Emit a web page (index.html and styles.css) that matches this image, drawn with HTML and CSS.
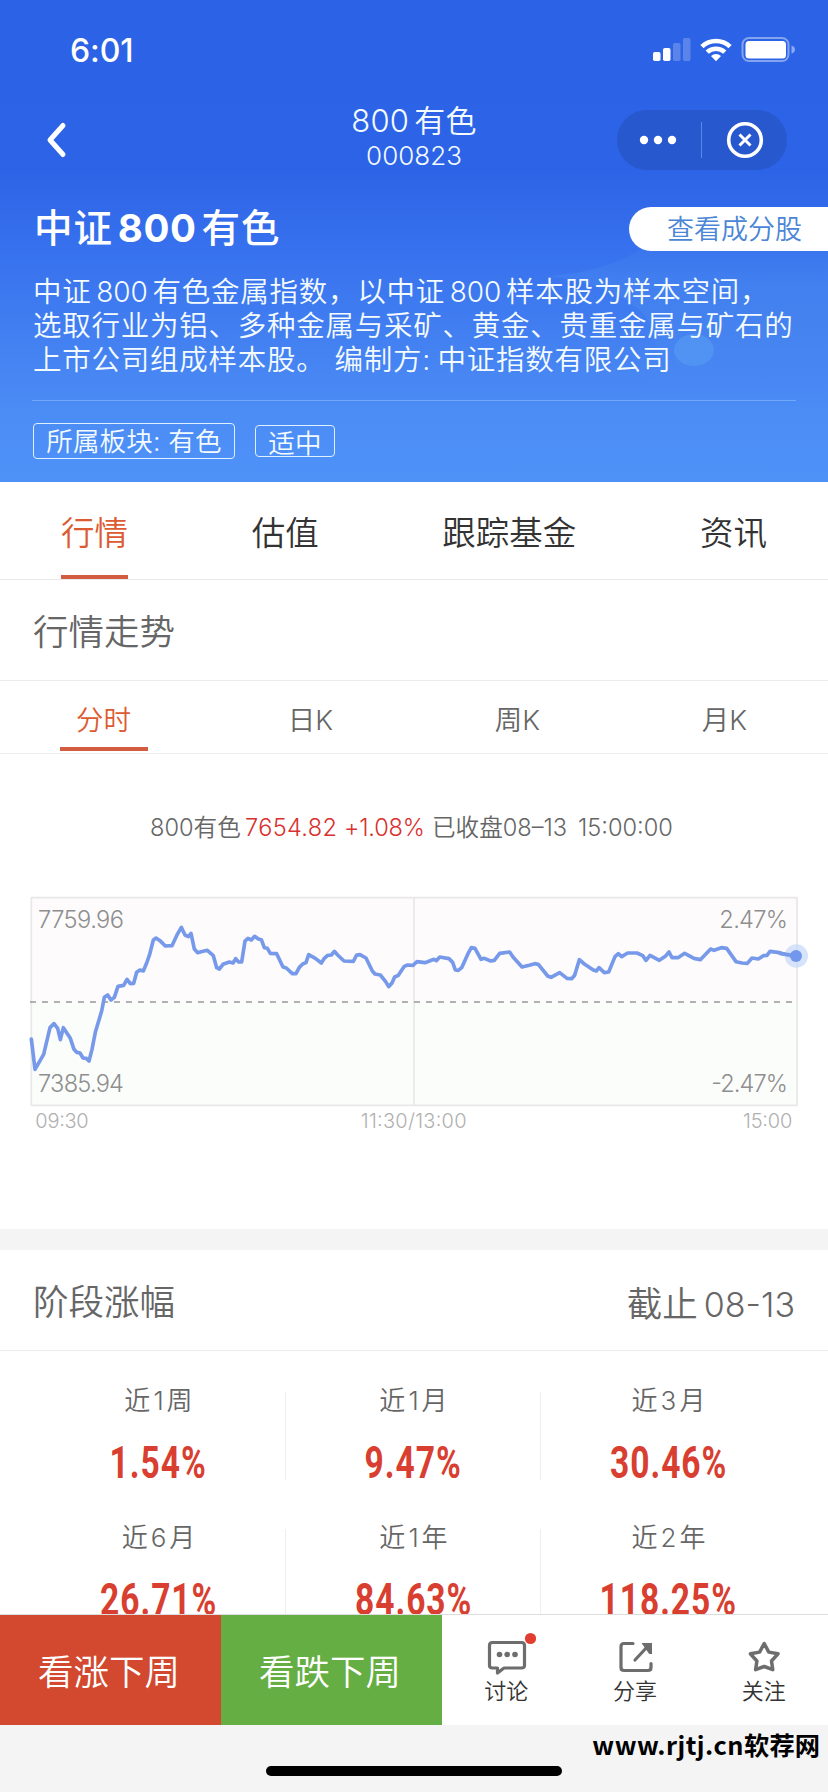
FILE: index.html
```html
<!DOCTYPE html>
<html lang="zh-CN">
<head>
<meta charset="utf-8">
<title>800有色</title>
<link rel="stylesheet" href="styles.css">
</head>
<body>
<div class="phone">
  <header class="hero">
    <svg class="hero-art" viewBox="0 0 828 482" aria-hidden="true">
      <defs>
        <linearGradient id="g" x1="0" y1="0" x2="0" y2="1">
          <stop offset="0" stop-color="#5aa0ee" stop-opacity="0"/>
          <stop offset=".35" stop-color="#5aa0ee" stop-opacity=".22"/>
          <stop offset="1" stop-color="#5aa0ee" stop-opacity="0"/>
        </linearGradient>
      </defs>
      <path d="M550 276Q640 268 660 225H828V400H640Q700 300 550 276Z" fill="url(#g)"/>
      <ellipse cx="694" cy="350" rx="20" ry="16" fill="#5ba4f3" opacity=".45"/>
    </svg>
    <div class="status">
      <span class="clock">6:01</span>
      <svg class="status-icons" viewBox="0 0 144 26">
        <g fill="#fff">
          <rect x="0" y="16" width="7.5" height="9" rx="1.8"/>
          <rect x="10" y="12" width="7.5" height="13" rx="1.8"/>
          <g opacity=".22"><rect x="20" y="7" width="7.5" height="18" rx="1.8"/><rect x="30" y="2" width="7.5" height="23" rx="1.8"/></g>
          <path d="M63 25.2l-5-5.3a7.4 7.4 0 0 1 10 0z"/>
        </g>
        <g fill="none" stroke="#fff" stroke-width="4.6">
          <path d="M48.9 10.6a20.5 20.5 0 0 1 28.2 0"/>
          <path d="M54.2 16.2a12.8 12.8 0 0 1 17.6 0"/>
        </g>
        <rect x="89.5" y="2" width="46" height="23" rx="6.5" fill="none" stroke="#fff" stroke-opacity=".42" stroke-width="2"/>
        <rect x="92.500" y="5" width="40.500" height="17.500" rx="3.500" fill="#fff"/>
        <path d="M138.500 9.500q3.500 1 3.500 4t-3.500 4z" fill="#fff" opacity=".45"/>
      </svg>
    </div>
    <nav class="nav">
      <svg class="back" viewBox="0 0 24 40"><path d="M18 5.500L5 20l13 14.500" fill="none" stroke="#fff" stroke-width="5" stroke-linecap="round" stroke-linejoin="round"/></svg>
      <div class="nav-title"><div class="nav-name"><span class="lat">800</span>有色</div><div class="nav-code">000823</div></div>
      <svg class="capsule" viewBox="0 0 170 60">
        <rect width="170" height="60" rx="30" fill="#2858cd"/>
        <g fill="#fff"><circle cx="27" cy="30" r="4.200"/><circle cx="41" cy="30" r="4.200"/><circle cx="55" cy="30" r="4.200"/></g>
        <path d="M84.500 12v36" stroke="#5c86e4" stroke-width="1"/>
        <circle cx="128" cy="30" r="16.300" fill="none" stroke="#fff" stroke-width="3.600"/>
        <path d="M122.500 24.500l11 11m0-11l-11 11" stroke="#fff" stroke-width="3"/>
      </svg>
    </nav>
    <div class="hero-head">
      <h1 class="hero-name">中证<span class="lat">800</span>有色</h1>
      <a class="members">查看成分股</a>
    </div>
    <p class="intro">中证<span class="lat">800</span>有色金属指数，以中证<span class="lat">800</span>样本股为样本空间，<br>选取行业为铝、多种金属与采矿、黄金、贵重金属与矿石的<br>上市公司组成样本股。<span class="maker">编制方:</span>中证指数有限公司</p>
    <div class="tags"><span class="tag">所属板块: 有色</span><span class="tag small">适中</span></div>
  </header>

  <nav class="tabs">
    <span class="tab active">行情</span><span class="tab">估值</span><span class="tab">跟踪基金</span><span class="tab">资讯</span>
  </nav>
  <h2 class="section-title">行情走势</h2>
  <nav class="periods">
    <span class="period active">分时</span><span class="period">日K</span><span class="period">周K</span><span class="period">月K</span>
  </nav>
  <section class="market">
    <div class="quote"><span class="q-name">800有色</span><span class="q-red">7654.82</span><span class="q-pct">+1.08%</span><span class="q-state">已收盘08–13</span><span>15:00:00</span></div>
    <svg class="chart" viewBox="0 330 2484 750">
      <rect x="93" y="352" width="2299" height="314" fill="#fdfbfc"/>
      <rect x="93" y="666" width="2299" height="310" fill="#fbfdfb"/>
      <path d="M94 352V976M1242 352V976M2391 352V976M92 353H2393M92 976H2393" stroke="#e8e8e8" stroke-width="5" fill="none"/>
      <path d="M90 666H2386" stroke="#999" stroke-width="5" stroke-dasharray="18 18"/>
      <g class="chart-value">
        <text x="114" y="443" textLength="258">7759.96</text><text x="114" y="936" textLength="258">7385.94</text>
        <text x="2364" y="443" text-anchor="end" textLength="206">2.47%</text><text x="2364" y="936" text-anchor="end" textLength="230">-2.47%</text>
      </g>
      <g class="chart-time">
        <text x="106" y="1044" textLength="160">09:30</text><text x="1241" y="1044" text-anchor="middle" textLength="317">11:30/13:00</text><text x="2377" y="1044" text-anchor="end" textLength="148">15:00</text>
      </g>
      <polyline class="line" points="94,777 105,868 131,823 150,743 162,731 173,745 181,779 190,743 211,775 222,808 230,817 240,819 249,834 259,835 267,843 276,808 286,757 305,693 313,652 323,645 333,660 343,652 354,619 371,616 381,598 391,611 401,610 410,577 420,570 430,573 440,549 449,523 460,480 468,474 480,482 496,498 516,497 532,463 544,442 555,465 565,470 573,460 583,507 593,518 612,513 622,511 640,527 650,563 658,567 669,553 688,546 699,549 707,536 716,546 725,546 735,483 744,475 754,480 764,469 775,477 784,479 793,503 802,505 811,520 830,521 849,561 859,564 877,581 888,581 898,562 908,552 918,548 926,524 946,535 964,549 973,535 983,526 994,525 1003,514 1013,525 1032,543 1060,544 1070,525 1080,524 1098,534 1117,573 1125,582 1141,585 1157,605 1166,620 1176,609 1184,591 1195,586 1213,559 1223,555 1240,556 1242,553 1251,545 1275,548 1302,538 1309,542 1319,531 1347,536 1358,547 1366,570 1375,571 1385,563 1404,521 1414,503 1425,505 1443,538 1453,535 1472,543 1483,541 1499,520 1529,516 1539,531 1566,561 1588,556 1604,551 1615,553 1643,588 1653,592 1679,578 1701,595 1715,596 1724,586 1738,539 1753,552 1780,570 1789,573 1797,563 1813,578 1826,576 1845,530 1855,521 1865,530 1883,519 1911,519 1928,527 1938,541 1950,526 1978,541 1996,529 2007,516 2016,533 2034,533 2054,520 2082,535 2101,539 2132,507 2142,511 2164,503 2180,505 2208,545 2226,549 2242,550 2256,534 2275,537 2290,527 2301,526 2310,514 2338,518 2370,527 2389,527"/>
      <circle cx="2389" cy="528" r="35" fill="#c5d9fa" fill-opacity=".7"/><path d="M2340 520L2389 528" class="line"/><circle cx="2388" cy="528" r="18" fill="#7297ec"/>
    </svg>
  </section>
  <div class="band"></div>
  <div class="section-title gains-title"><span>阶段涨幅</span><span class="until">截止<span class="lat">08-13</span></span></div>
  <section class="gains">
    <div class="gain"><span class="label">近<i>1</i>周</span><strong>1.54%</strong></div>
    <div class="gain"><span class="label">近<i>1</i>月</span><strong>9.47%</strong></div>
    <div class="gain"><span class="label">近<i>3</i>月</span><strong>30.46%</strong></div>
    <div class="gain"><span class="label">近<i>6</i>月</span><strong>26.71%</strong></div>
    <div class="gain"><span class="label">近<i>1</i>年</span><strong>84.63%</strong></div>
    <div class="gain"><span class="label">近<i>2</i>年</span><strong>118.25%</strong></div>
  </section>

  <footer class="actions">
    <a class="vote up">看涨下周</a><a class="vote down">看跌下周</a>
    <a class="action">
      <svg viewBox="0 0 50 44"><path d="M10.500 9.500h29q3 0 3 3v20q0 2.500-3 2.500H22l-6.500 5v-5h-5q-3 0-3-2.500v-20q0-3 3-3z" transform="translate(1 0)" fill="none" stroke="#6d6d6d" stroke-width="3.200" stroke-linejoin="round"/><g fill="#6d6d6d"><circle cx="18.500" cy="21.500" r="2.800"/><circle cx="26.200" cy="21.500" r="2.800"/><circle cx="34" cy="21.500" r="2.800"/></g><circle cx="49.500" cy="5.500" r="5.600" fill="#e03e30"/></svg>
      <span>讨论</span></a>
    <a class="action">
      <svg viewBox="0 0 50 44"><g fill="none" stroke="#6d6d6d" stroke-width="3.200" stroke-linecap="round" stroke-linejoin="round"><path d="M23 10.500H14q-3 0-3 3v21q0 3 3 3h24q3 0 3-3v-4M25 27L38 13"/></g><path d="M31.500 10h10.500v11h-2.800z" fill="#6d6d6d"/></svg>
      <span>分享</span></a>
    <a class="action">
      <svg viewBox="0 0 50 44"><path d="M25.200 10.500l4.600 8.600 9.200 1.700-6.500 7.200 1.300 8.700-8.600-3.200-8.600 3.200 1.300-8.700-6.500-7.200 9.200-1.700z" fill="none" stroke="#6d6d6d" stroke-width="3.500" stroke-linejoin="round"/></svg>
      <span>关注</span></a>
  </footer>
  <div class="bottom">
    <div class="watermark"><span class="site">www.rjtj.cn</span>软荐网</div>
    <div class="home"></div>
  </div>
</div>
</body>
</html>
```
FILE: styles.css
```css
* { box-sizing: border-box; }
body { margin: 0; background: #fff; }
h1, h2, p { margin: 0; font-weight: inherit; }
.phone {
  width: 828px; height: 1792px; overflow: hidden;
  display: flex; flex-direction: column;
  font-family: Inter, "Noto Sans CJK SC", sans-serif;
  font-weight: 350; color: #666; white-space: nowrap;
}
.phone > * { flex-shrink: 0; }

.hero {
  position: relative; height: 482px; color: #f4fbff;
  background: linear-gradient(#2c62e5 0, #2d63e6 170px, #3771ee 250px, #4380f1 340px, #4b8cf5 410px, #4e92f8 482px);
}
.hero > * { position: relative; }
.hero .hero-art { position: absolute; inset: 0; width: 828px; height: 482px; }
.status { height: 100px; padding: 0 31px 0 70px; display: flex; align-items: center; justify-content: space-between; }
.clock { font-size: 32px; font-weight: 550; color: #fff; letter-spacing: -.1px; }
.status-icons { width: 144px; height: 26px; margin-top: -2px; }
.nav { height: 80px; padding: 0 41px 0 45px; display: grid; grid-template-columns: 170px 1fr 170px; align-items: center; }
.back { width: 24px; height: 40px; }
.nav-title { text-align: center; padding: 0 4px 5px 0; }
.nav-name { font-size: 31px; line-height: 37px; letter-spacing: .2px; }
.nav-name .lat { margin-right: 5px; }
.nav-code { font-size: 26px; line-height: 34px; }
.capsule { width: 170px; height: 60px; }
.hero-head { height: 94px; padding: 0 0 0 34px; display: flex; align-items: center; justify-content: space-between; }
.hero-name { font-size: 38.500px; font-weight: 500; color: #fff; letter-spacing: .9px; margin-top: -4px; }
.hero-name .lat { font-weight: 650; margin: 0 5px; letter-spacing: .6px; }
.members {
  width: 199px; height: 44px; padding-left: 38px; margin-top: 4px;
  border-radius: 22px 0 0 22px; background: #fff; color: #4b86d6;
  font-size: 27px; line-height: 45px;
}
.intro {
  margin: 0 32px; height: 127px; padding: 1px 0 0 1px; border-bottom: 1px solid #72a8f6;
  font-size: 28.500px; line-height: 34px; letter-spacing: .75px;
}
.intro .lat { display: inline-block; width: 61px; font-size: 28px; text-align: center; letter-spacing: 0; }
.maker { display: inline-block; width: 103px; margin-left: 9px; }
.tags { margin: 22px 0 0 33px; display: flex; align-items: center; gap: 20px; }
.tag { width: 202px; height: 36px; border: 1.5px solid #dff1ff; border-radius: 4px; font-size: 26.500px; line-height: 34px; text-align: center; letter-spacing: .2px; }
.tag.small { width: 80px; height: 32px; }

.tabs { height: 98px; padding: 0 61px; border-bottom: 1px solid #e9e9e9; display: flex; justify-content: space-between; }
.tab { height: 97px; font-size: 33.500px; line-height: 103px; color: #333; border-bottom: 4px solid transparent; }
.tab.active, .period.active { color: #dc5b33; }
.tab.active { border-bottom-color: #d15c40; }
.section-title { height: 101px; padding: 0 33px; border-bottom: 1px solid #ebebeb; font-size: 35.500px; line-height: 106px; }
.periods { height: 73px; border-bottom: 1px solid #eee; display: grid; grid-template-columns: repeat(4, 207px); justify-items: center; }
.period { width: 88px; height: 70px; text-align: center; font-size: 27.500px; line-height: 78px; }
.period.active { border-bottom: 4px solid #d15c40; }

.market { height: 475px; }
.quote { height: 136px; padding: 58px 0 0 150px; display: flex; align-items: baseline; font-size: 23.600px; line-height: 32px; }
.q-name { width: 95px; }
.q-red, .q-pct { color: #d8312f; }
.q-red { width: 99px; letter-spacing: .3px; }
.q-pct { width: 88px; letter-spacing: -.2px; }
.q-state { width: 146px; }
.chart { display: block; width: 828px; height: 250px; }
.chart-value { font-size: 71px; fill: #8e8e8e; }
.chart-time { font-size: 60px; fill: #b0b0b0; }
.line { fill: none; stroke: #7799ea; stroke-width: 11; stroke-linejoin: round; stroke-linecap: round; }
.band { height: 21px; background: #f4f4f4; }
.gains-title { display: flex; justify-content: space-between; }
.until { padding-top: 2px; }
.until .lat { font-size: 34px; margin-left: 6px; }
.gains { height: 263px; padding-left: 31px; overflow: hidden; display: grid; grid-template-columns: repeat(3, 255px); grid-auto-rows: 136.500px; }
.gain { display: flex; flex-direction: column; align-items: center; position: relative; }
.gain:not(:nth-child(3n))::after { content: ""; position: absolute; right: 0; top: 41px; width: 1px; height: 88px; background: #eee; }
.label { margin-top: 30px; font-size: 26px; line-height: 40px; }
.label i { font-style: normal; margin: 0 3px; }
.gain strong { font: 700 45px/56px Roboto, sans-serif; color: #d83f31; margin-top: 14px; transform: scaleX(.745); letter-spacing: 1.3px; }

.actions { height: 111px; display: grid; grid-template-columns: 221px 221px 1fr 1fr 1fr; border-top: 1px solid #ddd; background: #fff; }
.vote { margin-top: 0; color: #fff; font-size: 35.500px; text-align: center; line-height: 116px; padding-right: 3px; }
.up { background: #d2492f; }
.down { background: #65ae43; }
.action { display: flex; flex-direction: column; align-items: center; color: #333; font-size: 22px; line-height: 30px; padding-top: 18px; }
.action svg { width: 50px; height: 44px; overflow: visible; }
.action span { margin-top: -1px; }
.bottom { flex: 1; background: #f4f4f4; display: flex; flex-direction: column; align-items: center; }
.watermark { align-self: flex-end; height: 41px; padding-right: 8px; font: 700 25.300px/39px "Noto Sans CJK SC", sans-serif; color: #000; }
.site { letter-spacing: .5px; }
.home { width: 296px; height: 10px; border-radius: 5px; background: #000; }
```
